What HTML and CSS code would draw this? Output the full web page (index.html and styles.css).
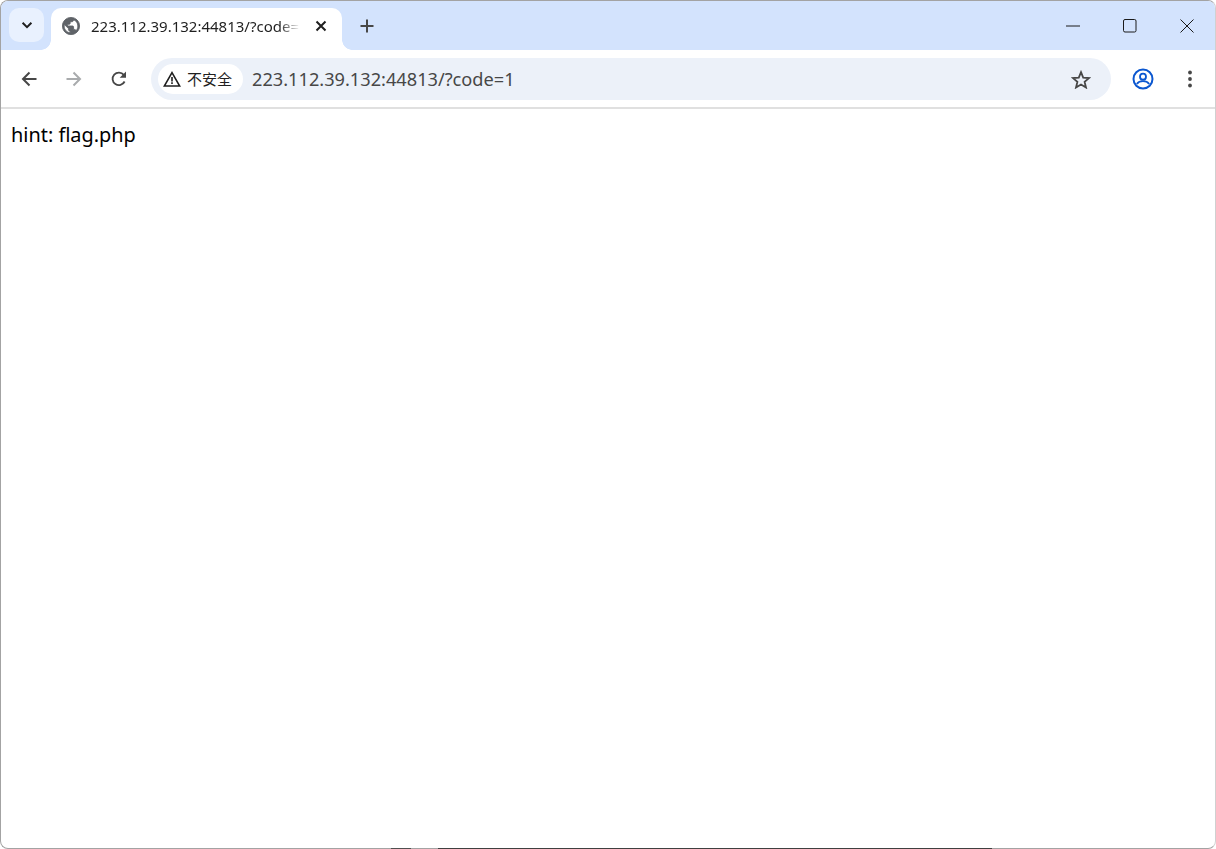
FILE: index.html
```html
<!DOCTYPE html>
<html lang="zh">
<head>
<meta charset="utf-8">
<title>223.112.39.132:44813/?code=1</title>
<link rel="stylesheet" href="styles.css">
</head>
<body>
<div class="window">
  <div class="tabstrip">
    <button class="tab-search"><svg width="16" height="16" viewBox="0 0 16 16"><path d="M3.6 5.8 8 10.2l4.4-4.4" fill="none" stroke="#1f1f1f" stroke-width="2"/></svg></button>
    <div class="tab">
      <svg class="favicon" width="18" height="18" viewBox="1.500 1.500 21 21"><path fill="#5f6368" stroke="#5f6368" stroke-width="1" d="M12 2C6.48 2 2 6.48 2 12s4.48 10 10 10 10-4.48 10-10S17.52 2 12 2zm-1 17.930c-3.950-.49-7-3.850-7-7.930 0-.62.080-1.210.21-1.790L9 15v1c0 1.100.9 2 2 2v1.930zm6.900-2.540c-.26-.81-1-1.390-1.900-1.390h-1v-3c0-.55-.45-1-1-1H8v-2h2c.55 0 1-.45 1-1V7h2c1.100 0 2-.9 2-2v-.41c2.930 1.190 5 4.060 5 7.410 0 2.080-.8 3.970-2.100 5.390z"/></svg>
      <span class="tab-title">223.112.39.132:44813/?code=1</span>
      <svg class="tab-close" width="12" height="12" viewBox="0 0 12 12"><path d="M1.500 1.500l9 9m0-9-9 9" stroke="#1f1f1f" stroke-width="2"/></svg>
    </div>
    <svg class="new-tab" width="14" height="14" viewBox="0 0 14 14"><path d="M7 .5v13M.5 7h13" stroke="#474747" stroke-width="2"/></svg>
    <div class="caption">
      <svg width="14" height="14" viewBox="0 0 14 14"><path d="M0 7h14" stroke="#1a1a1a" stroke-width="1"/></svg>
      <svg width="14" height="14" viewBox="0 0 14 14"><rect x=".5" y=".5" width="12.500" height="12.500" rx="1.500" fill="none" stroke="#1a1a1a"/></svg>
      <svg width="14" height="14" viewBox="0 0 14 14"><path d="M.5.5l13 13m0-13-13 13" stroke="#1a1a1a"/></svg>
    </div>
  </div>
  <div class="toolbar">
    <svg class="nav" width="16" height="16" viewBox="0 0 16 16"><path d="M15.500 8H2M8.500 1.500 2 8l6.500 6.500" fill="none" stroke="#474747" stroke-width="2"/></svg>
    <svg class="nav" width="16" height="16" viewBox="0 0 16 16"><path d="M.5 8H14M7.500 1.500 14 8l-6.500 6.500" fill="none" stroke="#a9abad" stroke-width="2"/></svg>
    <svg class="nav" width="16" height="16" viewBox="0 0 16 16"><path d="M13.600 10.500A6.300 6.300 0 1 1 12.800 3.900" fill="none" stroke="#474747" stroke-width="1.800"/><path d="M15 0.500V6.800H8.700z" fill="#474747"/></svg>
    <div class="omnibox">
      <div class="chip">
        <svg width="18" height="16" viewBox="0 0 18 16"><path d="M9 1.700 16.700 15H1.300z" fill="none" stroke="#1f1f1f" stroke-width="1.600"/><path d="M8.200 6h1.600v4.600H8.200zM8.200 11.300h1.600V13H8.200z" fill="#1f1f1f"/></svg>
        <span class="chip-text">不安全</span>
      </div>
      <span class="url">223.112.39.132:44813/?code=1</span>
      <svg class="star" width="20" height="19" viewBox="0 0 20 19"><path d="M10 2.200 12.200 7.600 18 8.100 13.600 11.900 15 17.500 10 14.500 5 17.500 6.400 11.900 2 8.100 7.800 7.600z" fill="none" stroke="#474747" stroke-width="1.800"/></svg>
    </div>
    <svg class="profile" width="22" height="22" viewBox="0 0 22 22"><circle cx="11" cy="11" r="9.500" fill="none" stroke="#0b57d0" stroke-width="2"/><circle cx="11" cy="8.700" r="3" fill="none" stroke="#0b57d0" stroke-width="1.800"/><path d="M4.800 16c1.500-2 3.800-2.800 6.200-2.800s4.700.8 6.200 2.800" fill="none" stroke="#0b57d0" stroke-width="1.800"/></svg>
    <svg class="menu" width="4" height="18" viewBox="0 0 4 18"><circle cx="2" cy="2.500" r="1.900" fill="#474747"/><circle cx="2" cy="9" r="1.900" fill="#474747"/><circle cx="2" cy="15.500" r="1.900" fill="#474747"/></svg>
  </div>
  <main class="content">hint: flag.php</main>
</div>
</body>
</html>
```
FILE: styles.css
```css
* { box-sizing: border-box; }
html, body { margin: 0; height: 100%; background: #fff; overflow: hidden; }
body::after {
  content: "";
  position: fixed;
  left: 0;
  right: 0;
  bottom: 0;
  height: 1px;
  background: linear-gradient(to right,
    transparent 391px, #505050 391px, #505050 411px,
    transparent 411px, transparent 438px, #404040 438px, #404040 992px,
    transparent 992px);
}
.window {
  height: 849px;
  display: flex;
  flex-direction: column;
  border: 1px solid #a3a3a3;
  border-right-color: #d0d0d0;
  border-radius: 8px;
  overflow: hidden;
  background: #fff;
}
.tabstrip {
  height: 49px;
  flex: none;
  display: flex;
  align-items: flex-start;
  background: #d3e3fd;
  padding: 7px 0 0 8px;
}
.tab-search {
  width: 35px;
  height: 34px;
  border: 0;
  padding: 0;
  border-radius: 10px;
  background: #e9f1fe;
  display: flex;
  align-items: center;
  justify-content: center;
  margin-right: 7px;
}
.tab {
  position: relative;
  width: 291px;
  height: 42px;
  background: #fff;
  border-radius: 10px 10px 0 0;
  display: flex;
  align-items: center;
  padding: 0 15px 6px 11px;
}
.tab::before, .tab::after {
  content: "";
  position: absolute;
  bottom: 0;
  width: 10px;
  height: 10px;
}
.tab::before { left: -10px; background: radial-gradient(circle at 0 0, #d3e3fd 9.500px, #fff 10px); }
.tab::after { right: -10px; background: radial-gradient(circle at 100% 0, #d3e3fd 9.500px, #fff 10px); }
.favicon { flex: none; margin-right: 11px; }
.tab-title {
  width: 209px;
  flex: none;
  overflow: hidden;
  white-space: nowrap;
  font: 15px/20px "Noto Sans", sans-serif;
  color: #1f1f1f;
  -webkit-mask-image: linear-gradient(to right, #000 188px, transparent 209px);
  mask-image: linear-gradient(to right, #000 188px, transparent 209px);
}
.tab-close { flex: none; margin-left: auto; }
.new-tab { flex: none; margin: 11px 0 0 18px; }
.caption {
  margin-left: auto;
  display: flex;
  gap: 43px;
  padding: 11px 21px 0 0;
}
.toolbar {
  height: 59px;
  flex: none;
  display: flex;
  align-items: center;
  background: #fff;
  border-radius: 8px 8px 0 0;
  border-bottom: 2px solid #e0e0e0;
  padding: 1px 23px 0 20px;
}
.nav { flex: none; margin-right: 29px; }
.nav:nth-child(3) { margin-right: 24px; }
.omnibox {
  flex: 1;
  height: 42px;
  display: flex;
  align-items: center;
  background: #ecf1f9;
  border-radius: 21px;
  padding: 0 20px 0 7px;
}
.chip {
  height: 30px;
  width: 85px;
  flex: none;
  display: flex;
  align-items: center;
  gap: 6px;
  background: #fff;
  border-radius: 15px;
  padding-left: 5px;
}
.chip-text {
  font: 15px/20px "Noto Sans CJK SC", sans-serif;
  color: #1f1f1f;
}
.url {
  margin-left: 9px;
  font: 18.200px/24px "Noto Sans", sans-serif;
  color: #474747;
  white-space: nowrap;
  flex: 1;
}
.star { flex: none; }
.profile { flex: none; margin-left: 21px; }
.menu { flex: none; margin-left: 34px; }
.content {
  flex: 1;
  padding: 14px 10px;
  font: 19.900px/23px "Noto Sans", sans-serif;
  color: #000;
}
```
